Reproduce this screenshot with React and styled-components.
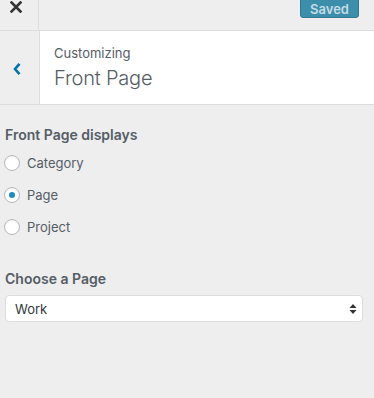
import React, { useState } from 'react';
import styled, { createGlobalStyle } from 'styled-components';

const GlobalStyle = createGlobalStyle`
  html, body {
    margin: 0;
    padding: 0;
    background: #eeeeee;
  }
  body {
    font-family: Inter, "Noto Sans", "Liberation Sans", sans-serif;
    color: #555d66;
  }
`;

const options = ['Category', 'Page', 'Project'];

const App = () => {
  const [choice, setChoice] = useState('Page');

  return (
    <>
      <GlobalStyle />
      <Panel>
        <TopBar>
          <CloseCell>
            <svg width="12" height="12" viewBox="0 0 12 12">
              <path d="M1.5 1.5 L10.5 10.5 M10.5 1.5 L1.5 10.5" stroke="#333" strokeWidth="2.6" strokeLinecap="square" />
            </svg>
          </CloseCell>
          <Actions>
            <SavedButton>Saved</SavedButton>
          </Actions>
        </TopBar>

        <Header>
          <BackCell>
            <svg width="10" height="14" viewBox="0 0 10 14">
              <path d="M7.5 1.8 L3 7 L7.5 12.2" fill="none" stroke="#0073aa" strokeWidth="2.6" />
            </svg>
          </BackCell>
          <Titles>
            <Eyebrow>Customizing</Eyebrow>
            <Title>Front Page</Title>
          </Titles>
        </Header>

        <Body>
          <Section>
            <Label>Front Page displays</Label>
            <RadioList>
              {options.map(opt => (
                <RadioRow key={opt} onClick={() => setChoice(opt)}>
                  <Radio checked={choice === opt} />
                  <span>{opt}</span>
                </RadioRow>
              ))}
            </RadioList>
          </Section>

          <Section>
            <Label>Choose a Page</Label>
            <Select>
              <span>Work</span>
              <svg width="8" height="12" viewBox="0 0 8 12">
                <path d="M4 1 L7.5 5 L0.5 5 Z M4 11 L7.5 7 L0.5 7 Z" fill="#333" />
              </svg>
            </Select>
          </Section>
        </Body>
      </Panel>
    </>
  );
};

export default App;

const Panel = styled.div`
  width: 374px;
  min-height: 398px;
  background: #eeeeee;
`;

const TopBar = styled.div`
  display: flex;
  height: 30px;
  border-bottom: 1px solid #dddddd;
`;

const CloseCell = styled.div`
  width: 39px;
  border-right: 1px solid #dddddd;
  display: flex;
  justify-content: center;
  padding-top: 1px;
  box-sizing: border-box;
  svg {
    margin-left: -7px;
  }
`;

const Actions = styled.div`
  flex: 1;
  display: flex;
  justify-content: flex-end;
  padding-right: 15px;
`;

const SavedButton = styled.div`
  width: 59px;
  height: 21px;
  margin-top: -3px;
  background: #3d8eaa;
  border: 1px solid #2f7894;
  border-radius: 3px;
  box-sizing: border-box;
  color: #c3dce6;
  font-size: 13px;
  font-weight: 600;
  display: flex;
  align-items: center;
  justify-content: center;
  padding-top: 2px;
`;

const Header = styled.div`
  display: flex;
  height: 73px;
  background: #ffffff;
  border-bottom: 1px solid #dddddd;
`;

const BackCell = styled.div`
  width: 39px;
  background: #eeeeee;
  border-right: 1px solid #dddddd;
  display: flex;
  align-items: center;
  justify-content: center;
  padding-top: 2px;
  svg {
    margin-left: -6px;
  }
`;

const Titles = styled.div`
  padding: 13px 0 0 14px;
  color: #555d66;
`;

const Eyebrow = styled.div`
  font-size: 13px;
  line-height: 18px;
`;

const Title = styled.div`
  font-size: 20px;
  font-weight: 300;
  line-height: 26px;
  margin-top: 3px;
  letter-spacing: -0.2px;
`;

const Body = styled.div`
  padding: 20px 11px 0 5px;
`;

const Section = styled.div`
  margin-bottom: 34px;
`;

const Label = styled.div`
  font-size: 14px;
  font-weight: 600;
  line-height: 20px;
  margin-bottom: 6px;
`;

const RadioList = styled.div`
  display: flex;
  flex-direction: column;
  gap: 16px;
  padding-top: 4px;
`;

const RadioRow = styled.label`
  display: flex;
  align-items: center;
  gap: 7px;
  font-size: 13px;
  height: 16px;
  margin-left: -1px;
`;

const Radio = styled.span`
  width: 16px;
  height: 16px;
  border-radius: 50%;
  border: 1px solid #b4b9be;
  background: #ffffff;
  box-sizing: border-box;
  box-shadow: inset 0 1px 2px rgba(0, 0, 0, 0.07);
  display: flex;
  align-items: center;
  justify-content: center;
  &::after {
    content: '';
    width: 6px;
    height: 6px;
    border-radius: 50%;
    background: #1e8cbe;
    display: ${p => (p.checked ? 'block' : 'none')};
  }
`;

const Select = styled.div`
  height: 27px;
  background: #ffffff;
  border: 1px solid #dddddd;
  border-radius: 4px;
  box-sizing: border-box;
  display: flex;
  align-items: center;
  justify-content: space-between;
  padding: 0 5px 0 9px;
  font-size: 13px;
  color: #32373c;
`;
